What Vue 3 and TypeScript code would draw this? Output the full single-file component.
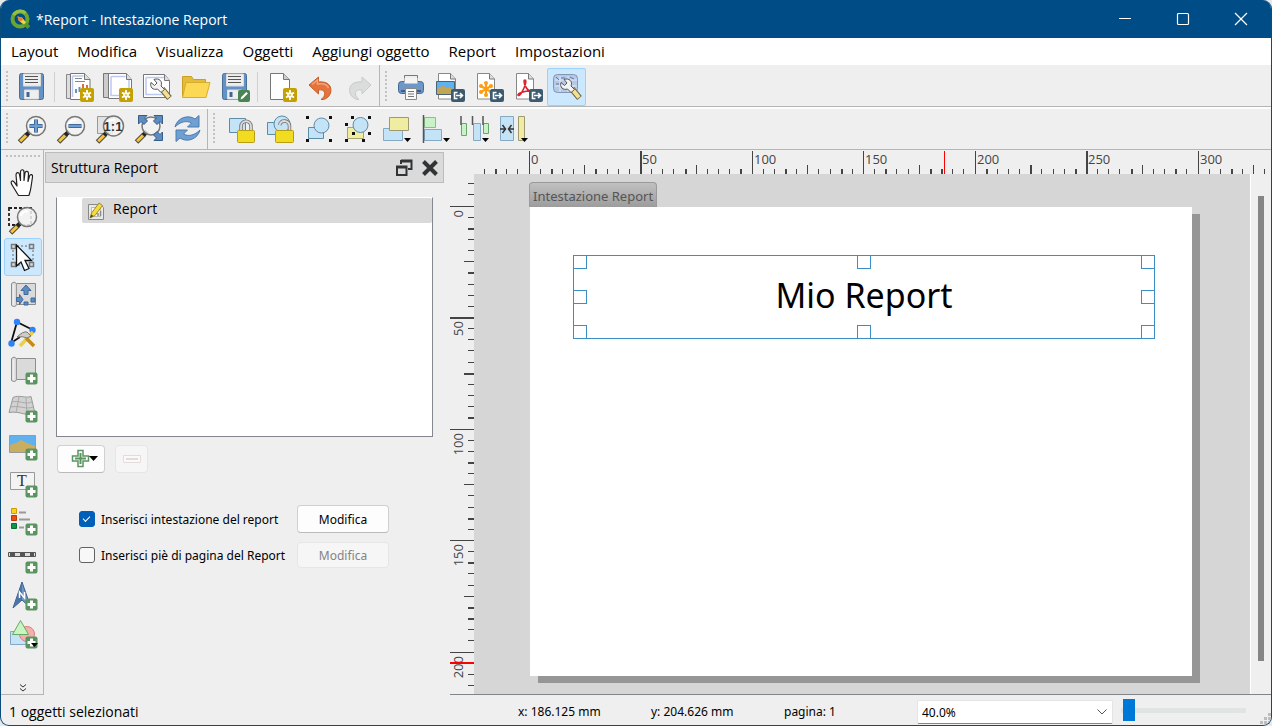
<script setup lang="ts">
import { ref } from 'vue'

interface Tool {
  id: string
  label: string
  active?: boolean
}

const menus = ['Layout', 'Modifica', 'Visualizza', 'Oggetti', 'Aggiungi oggetto', 'Report', 'Impostazioni']

const layoutTools: Tool[] = [
  { id: 'newReport', label: 'Nuovo layout' },
  { id: 'duplicate', label: 'Duplica layout' },
  { id: 'manager', label: 'Gestore layout' },
  { id: 'folder', label: 'Aggiungi da modello' },
  { id: 'saveAs', label: 'Salva come modello' },
]
const pageTools: Tool[] = [
  { id: 'newPage', label: 'Aggiungi pagine' },
  { id: 'undo', label: 'Annulla' },
  { id: 'redo', label: 'Ripristina' },
]
const exportTools: Tool[] = [
  { id: 'print', label: 'Stampa' },
  { id: 'exportImage', label: 'Esporta come immagine' },
  { id: 'exportSvg', label: 'Esporta come SVG' },
  { id: 'exportPdf', label: 'Esporta come PDF' },
  { id: 'settings', label: 'Impostazioni report', active: true },
]
const zoomTools: Tool[] = [
  { id: 'zoomIn', label: 'Ingrandisci' },
  { id: 'zoomOut', label: 'Rimpicciolisci' },
  { id: 'zoomActual', label: 'Zoom al 100%' },
  { id: 'zoomFull', label: 'Zoom completo' },
  { id: 'refresh', label: 'Aggiorna vista' },
]
const itemTools: Tool[] = [
  { id: 'lock', label: 'Blocca oggetti' },
  { id: 'unlock', label: 'Sblocca oggetti' },
  { id: 'group', label: 'Raggruppa' },
  { id: 'ungroup', label: 'Separa' },
  { id: 'raise', label: 'Porta in primo piano' },
  { id: 'align', label: 'Allinea' },
  { id: 'distribute', label: 'Distribuisci' },
  { id: 'resize', label: 'Ridimensiona' },
]
const sideTools: Tool[] = [
  { id: 'pan', label: 'Sposta layout' },
  { id: 'zoomArea', label: 'Zoom' },
  { id: 'select', label: 'Seleziona oggetto', active: true },
  { id: 'moveContent', label: 'Sposta contenuto' },
  { id: 'editNodes', label: 'Modifica nodi' },
  { id: 'addMap', label: 'Aggiungi mappa' },
  { id: 'add3d', label: 'Aggiungi mappa 3D' },
  { id: 'addPicture', label: 'Aggiungi immagine' },
  { id: 'addLabel', label: 'Aggiungi etichetta' },
  { id: 'addLegend', label: 'Aggiungi legenda' },
  { id: 'addScale', label: 'Aggiungi barra di scala' },
  { id: 'addNorth', label: 'Aggiungi freccia nord' },
  { id: 'addShape', label: 'Aggiungi forma' },
]

const plusBadge =
  '<rect x="17.500" y="17.500" width="12" height="12" rx="2" fill="#5a9460"/><path d="M23.500 19.500v8M19.500 23.500h8" stroke="#fff" stroke-width="3"/>'
const starBadge =
  '<rect x="16" y="16" width="14" height="14" rx="2" fill="#c4a000"/><path d="M23 18v10M19 20.500l8 5M27 20.500l-8 5" stroke="#fff" stroke-width="1.800"/><circle cx="23" cy="23" r="2.800" fill="#fff"/><circle cx="23" cy="23" r="1.300" fill="#e3cf6c"/>'
const exportBadge =
  '<rect x="16" y="17" width="14" height="13" rx="2" fill="#3d5b70"/><path d="M22.500 20.500h-3v6h3M21 23.500h6M25 21l2.500 2.500L25 26" fill="none" stroke="#fff" stroke-width="1.600"/>'
const dropArrow = '<path d="M22 24h7l-3.500 4z" fill="#000"/>'
const floppy =
  '<rect x="2.500" y="1.500" width="24" height="26" rx="2" fill="#6393c6" stroke="#4a6f97"/><path d="M6.500 2h17v12h-17z" fill="#eee" stroke="#dcdcdc"/><path d="M8 4.500h13M8 7.500h13M8 10.500h13" stroke="#555"/><path d="M7.500 18h14v9h-14z" fill="#efefef" stroke="#ddd"/><path d="M9.500 20h3v5h-3z" fill="#41658f"/>'
const lens = (cx: number, cy: number, r: number) =>
  `<path d="M2.500 28L10 20.500" stroke="#4b4b3c" stroke-width="5"/><path d="M3.200 27.300L9 21.500" stroke="#f6c443" stroke-width="3"/><path d="M9.500 21l3.500-3.500" stroke="#222" stroke-width="4.500"/><circle cx="${cx}" cy="${cy}" r="${r}" fill="#f2f2f0" fill-opacity=".85" stroke="#777" stroke-width="1.500"/><path d="M${cx - r + 3} ${cy - 1}a${r - 3} ${r - 3} 0 0 1 ${r - 2} -${r - 5}" fill="none" stroke="#fff" stroke-width="2"/>`
const wrench =
  '<path d="M20 17l7.500 9" stroke="#6b6443" stroke-width="6"/><path d="M20.500 17.500l6.500 8" stroke="#f4df95" stroke-width="4"/><path d="M12 7.500c5-2 9 2 7 6.500l3.500 3.500-3.500 3-3.500-3.500c-4.500 1.500-8-2-6.500-6.500l3.500 3 2.500-2.500z" fill="#f4f4f4" stroke="#555"/>'
const docPage = '<path d="M3.500 1.500h12l5 5.500v20h-17z" fill="#fff" stroke="#888"/><path d="M15.500 1.500v5.500h5" fill="#ddd" stroke="#777"/>'
const sheet =
  '<path d="M3.500 3.500Q6 .5 8.500 3.500H27.500V24.500H8.500Q7.500 28 3.500 25.500Z" fill="#dadada" stroke="#8d8d8d"/><path d="M8.500 4V24.500" stroke="#999"/><path d="M5.500 4.500V25" stroke="#f0f0f0" stroke-width="1.500"/>'
const dots = (pts: number[][]) => pts.map(([x, y]) => `<path d="M${x} ${y}h3v3h-3z" fill="#111"/>`).join('')

const icons: Record<string, string> = {
  save: floppy,
  saveAs: floppy + '<rect x="18" y="18" width="12" height="12" rx="2" fill="#4b8454"/><path d="M20.500 27.500l.8-2.600 5-4.900 1.600 1.600-5 5z" fill="#fff"/>',
  newReport:
    '<path d="M2.500 2.500h18v24h-18z" fill="#ddd" stroke="#888"/><path d="M6.500 1.500h14l5.500 6v20H6.500z" fill="#fff" stroke="#777"/><path d="M8.500 4h11M8.500 4v21" stroke="#b9c9ef" stroke-width="1.500"/><path d="M20.500 1.500v6h5.500" fill="#ddd" stroke="#777"/><path d="M11 6.500h7M11 9.500h10" stroke="#888"/><path d="M12 17v4M15.500 15v5" stroke="#6b8fc4" stroke-width="2"/><path d="M19 12v5M23 13v3" stroke="#d36d4b" stroke-width="2"/>' +
    starBadge,
  duplicate:
    '<path d="M.5 1.500h19v24H.5z" fill="#ccc" stroke="#777"/><path d="M5.500 1.500h18l5 6v19h-23z" fill="#fff" stroke="#777"/><path d="M8 4.500h14.500M8 4.500v19h12M26 8v10" fill="none" stroke="#b9c9ef" stroke-width="1.500"/><path d="M23.500 1.500v6h5" fill="#ddd" stroke="#777"/>' +
    starBadge,
  manager:
    '<path d="M1.500 2.500h21l5 6v17h-26z" fill="#fff" stroke="#777"/><path d="M4 5.500h18M4 5.500v17h20" fill="none" stroke="#b9c9ef" stroke-width="1.500"/><path d="M22.500 2.500v6h5" fill="#ddd" stroke="#777"/>' +
    wrench,
  folder:
    '<path d="M1.500 4.500h9l2 3h12v17h-23z" fill="#e5bc38" stroke="#c99f28"/><path d="M1.500 25.500L5 10.500h24l-4 15z" fill="#fcd955" stroke="#d7ad30"/>',
  newPage: '<path d="M3.500 1.500h13l6 6v20h-19z" fill="#fff" stroke="#777"/><path d="M16.500 1.500v6h6" fill="#ccc" stroke="#777"/>' + starBadge,
  undo: '<path d="M3 13L12.500 5v5c9-1 14 4 12 11-1 3-3.500 5.500-7 6.500H15c3.500-2.500 4-5 3.500-7-.7-2.500-3-3-6-2.500V22z" fill="#e4743c" stroke="#c85c2a"/><path d="M6 12.500l5.500-4.500v4c6-1 10 1 11 4" fill="none" stroke="#f2a47a" stroke-width="1.500"/>',
  redo: '<path d="M26 13L17 5v5C8 9 3 14 5 21c1 3 3.500 5.500 7 6.500h2c-3-2.500-4-5-3.500-7 .7-2.500 3-3 6.500-2.500V22z" fill="#dadddb" stroke="#c7cbc9"/>',
  print:
    '<path d="M8.500 3.500h13v9h-13z" fill="#eee" stroke="#777"/><rect x="2.500" y="9.500" width="25" height="12" rx="3" fill="#6e96c6" stroke="#466a97"/><path d="M8.500 6h13v5.500h-13z" fill="#f4f4f4"/><path d="M5 19h20" stroke="#405f86" stroke-width="2"/><path d="M9.500 16.500h11v11h-11z" fill="#fafafa" stroke="#888"/><path d="M12 19.500h6M12 22h6M12 24.500h6" stroke="#777"/>',
  exportImage:
    docPage + '<path d="M1.500 9.500h18v13h-18z" fill="#5fb1f0" stroke="#4a6275"/><path d="M2 18q5-7 10-2 4-1 7 2v4H2z" fill="#c2a655"/>' + exportBadge,
  exportSvg:
    docPage +
    '<path d="M12 10v14M6 13.500l12 7M18 13.500l-12 7" stroke="#ff9c10" stroke-width="2.200"/><g fill="#ff9c10"><circle cx="12" cy="11" r="2"/><circle cx="12" cy="23" r="2"/><circle cx="7" cy="14" r="2"/><circle cx="17" cy="20" r="2"/><circle cx="17" cy="14" r="2"/><circle cx="7" cy="20" r="2"/></g>' +
    exportBadge,
  exportPdf:
    docPage +
    '<path d="M12 8c2 0 0 7-3 12-2 4-4 4-4 3 0-2 7-4 12-4 3 0 4 1 2 1-4 0-8-7-8-11 0-.7.500-1 1-1z" fill="none" stroke="#d9232e" stroke-width="1.600"/>' +
    exportBadge,
  settings:
    '<rect x="1.500" y="2.500" width="24" height="18" rx="4" fill="#b5c8e6" stroke="#8296b6"/><path d="M3 8h22M3 14h22M8 4v16M16 4v16" stroke="#dfe9f7"/><path d="M4 5l3 3M9 6h4M18 5l4 2M4 12h3" stroke="#5c79a8"/>' +
    wrench,
  zoomIn: lens(19, 12, 9.5) + '<path d="M19 5.500v13M12.500 12h13" stroke="#34598a" stroke-width="4"/><path d="M19 6v12M13 12h12" stroke="#6f9ed4" stroke-width="2.500"/>',
  zoomOut: lens(19, 12, 9.5) + '<path d="M12.500 12h13" stroke="#34598a" stroke-width="4"/><path d="M13 12h12" stroke="#6f9ed4" stroke-width="2.500"/>',
  zoomActual:
    '<path d="M2.500 2.500h15v17h-15z" fill="#e2e2e2" stroke="#999"/>' +
    lens(18.5, 12, 10) +
    '<text x="18" y="17" text-anchor="middle" font-family="Liberation Sans, sans-serif" font-weight="700" font-size="13" fill="#333">1:1</text>',
  zoomFull:
    lens(17, 12, 9) +
    '<g fill="#5d8cc0" stroke="#365c8c"><path d="M4.500 1.500h8.500l-2.500 2.500 3 3-3.500 3.500-3-3-2.500 2.500z"/><path d="M28.500 1.500v8.500l-2.500-2.500-3 3-3.500-3.500 3-3-2.500-2.500z"/><path d="M28.500 26.500h-8.500l2.500-2.500-3-3 3.500-3.500 3 3 2.500-2.500z"/></g>',
  refresh:
    '<path d="M2 13C4 4 15 0 22 5l4-3.500V13H14.500L18.500 9C13 6 7 8 2 13z" fill="#6f9fd3" stroke="#4c7cb0"/><path d="M27 16c-2 9-13 13-20 8l-4 3.500V16h11.500L10.500 20c5.500 3 11.500 1 16.500-4z" fill="#6f9fd3" stroke="#4c7cb0"/>',
  lock: '<path d="M3.500 4.500h16v14h-16z" fill="#c5e3f6" stroke="#5c8ba8"/><path d="M15 17v-4.500c0-7 10-7 10 0V17" fill="none" stroke="#777" stroke-width="3.500"/><path d="M15 17v-4.500c0-7 10-7 10 0V17" fill="none" stroke="#ddd" stroke-width="1.800"/><rect x="11.500" y="16.500" width="17" height="12" rx="1" fill="#f1dc22" stroke="#b79d12"/>',
  unlock:
    '<path d="M2.500 8.500h13v12h-13z" fill="#c5e3f6" stroke="#5c8ba8"/><circle cx="17" cy="10" r="8" fill="#c5e3f6" stroke="#5c8ba8"/><path d="M14.500 11c2-6 10-5 10 1.500V17" fill="none" stroke="#777" stroke-width="3.500"/><path d="M14.500 11c2-6 10-5 10 1.500V17" fill="none" stroke="#ddd" stroke-width="1.800"/><rect x="10.500" y="16.500" width="18" height="12" rx="1" fill="#f1dc22" stroke="#b79d12"/>',
  group:
    '<path d="M4.500 13.500h15v11h-15z" fill="#c5e3f6" stroke="#5c8ba8"/><circle cx="17.500" cy="11.500" r="7.500" fill="#c5e3f6" stroke="#5c8ba8"/>' +
    dots([[2, 2], [25, 2], [2, 25], [25, 25]]),
  ungroup:
    '<path d="M4.500 13.500h16v11h-16z" fill="#f0eca2" stroke="#aaa56b"/><circle cx="17.500" cy="11" r="7.500" fill="#c5e3f6" stroke="#5c8ba8"/>' +
    dots([[2, 9], [2, 25], [19, 25], [8, 2], [25, 2], [25, 18], [9, 18]]),
  raise: '<path d="M1.500 14.500h19v12h-19z" fill="#c5e3f6" stroke="#84a9c4"/><path d="M7.500 3.500h19v13h-19z" fill="#f0eca2" stroke="#9d9a72"/>' + dropArrow,
  align: '<path d="M3.500 3.500h11v10h-11z" fill="#c8f3c8" stroke="#89bf89"/><path d="M3.500 15.500h17v11h-17z" fill="#c5e3f6" stroke="#84a9c4"/><path d="M2.500 1v28" stroke="#555" stroke-width="1.500"/>' + dropArrow,
  distribute:
    '<path d="M1.500 9.500h5v12h-5zM23.500 9.500h5v10h-5z" fill="#c8f3c8" stroke="#6ca56c"/><path d="M13.500 9.500h7v17h-7z" fill="#c5e3f6" stroke="#84a9c4"/><path d="M1 2v9M12.500 2v9M23 2v9" stroke="#555" stroke-width="1.500"/>' +
    dropArrow,
  resize:
    '<path d="M1.500 2.500h13v24h-13z" fill="#c5e3f6" stroke="#84a9c4"/><path d="M19.500 2.500h6v24h-6z" fill="#f0eca2" stroke="#9d9a72"/><path d="M1 15h5M3.500 11l3 4-3 4M15 15h-5M12.500 11l-3 4 3 4" fill="none" stroke="#333" stroke-width="1.500"/>' +
    dropArrow,
  pan: '<path d="M10.500 28.500L5 19.500c-2-3-2.500-5-1-5.500 2-.5 3.500 3 5 5L8 8c0-3 3-3 3.500-.5l1 6V5c0-3 3.500-3 3.500 0v8.500L17 6c.5-2.500 3.500-2 3.500.5l-.5 8 1.500-5.500c1-2.500 3.500-1.500 3 1L23 20c-.5 4-1.500 6-2 8.500z" fill="#fff" stroke="#222" stroke-width="1.200" stroke-linejoin="round"/>',
  zoomArea: '<path d="M1 3h22v17H1z" fill="none" stroke="#222" stroke-width="1.800" stroke-dasharray="3 2"/>' + lens(19, 12, 9.5),
  select:
    '<path d="M5 4h20v19H5z" fill="none" stroke="#666" stroke-dasharray="2 2"/><g fill="#ddd" stroke="#777" stroke-width="1.500"><path d="M3.500 2.500h4v4h-4zM21.500 2.500h4v4h-4zM3.500 20.500h4v4h-4zM21.500 20.500h4v4h-4z"/></g><path d="M8.500 3v21l4.500-4 3.500 8.500 4.500-2-4-8h6.500z" fill="#fff" stroke="#111" stroke-width="1.300"/>',
  moveContent:
    sheet +
    '<g fill="#5d8cc0" stroke="#41699b"><path d="M18 5l5 5.500h-3v4h-4v-4h-3zM8.500 17.500h3v-3l3.500 5-3.500 5v-3h-3zM16 22h4v3h-4zM23 18h4v4h-4z"/></g>',
  editNodes:
    '<path d="M9 4L3 25M9 4l16 8M3 25l9-6" stroke="#111" stroke-width="1.800"/><g fill="#2f82f5"><circle cx="9" cy="4" r="3.200"/><circle cx="24.500" cy="12" r="3.200"/><circle cx="3.500" cy="25.500" r="3.200"/></g><path d="M12 28L25 14" stroke="#ecd044" stroke-width="3.500"/><path d="M18 20l8 8" stroke="#c58a19" stroke-width="3.500"/><path d="M9 19q6-6 10-5l4 4-4 2q-4-2-10-1z" fill="#ccc" stroke="#777"/>',
  addMap: sheet + plusBadge,
  add3d:
    '<path d="M5 4.500c6-3 12 1 18-1l4 17c-7 4-15-3-26-1z" fill="#d2d2d2" stroke="#999"/><path d="M3 14c8-2 16 3 22 0M4 9c7-2 14 3 20 0M11 4l-3 16M18 5l1 17" fill="none" stroke="#aaa"/>' +
    plusBadge,
  addPicture: '<path d="M1.500 4.500h26v17h-26z" fill="#5fb1f0" stroke="#999"/><path d="M2 14l6-2 5-3 6 3 8 3v6H2z" fill="#c9ae5f"/>' + plusBadge,
  addLabel:
    '<path d="M2.500 4.500h24v17h-24z" fill="#f3f3f3" stroke="#999"/><text x="14" y="18" text-anchor="middle" font-family="Liberation Serif, serif" font-size="16" fill="#333">T</text>' + plusBadge,
  addLegend:
    '<path d="M3.500 2.500h5v5h-5z" fill="#fcd01c" stroke="#cf9b00"/><path d="M3.500 9.500h5v5h-5z" fill="#ef4a12" stroke="#b93908"/><path d="M3.500 17.500h5v5h-5z" fill="#12934c" stroke="#0c6c37"/><path d="M11 6.500h7M11 13.500h11M11 21.500h5" stroke="#999" stroke-width="2"/>' +
    plusBadge,
  addScale: '<path d="M.5 8.500h27v4H.5z" fill="#ddd" stroke="#555"/><path d="M2 10.500h5M12 10.500h5M22 10.500h4" stroke="#555" stroke-width="3"/>' + plusBadge,
  addNorth:
    '<path d="M14 1L5 27l9-8 9 8z" fill="#6f97c7" stroke="#395c88"/><path d="M14 1L5 27l9-8z" fill="#4d74a5"/><path d="M11.500 17v-6l5 6v-6" fill="none" stroke="#fff" stroke-width="1.500"/>' + plusBadge,
  addShape:
    '<path d="M2.500 12.500h16v13h-16z" fill="#c5e3f6" stroke="#84a9c4"/><circle cx="19" cy="15" r="7.500" fill="#f6b0ac" stroke="#d97f7b"/><path d="M12.500 1.500l8 14h-16z" fill="#c8f5c0" stroke="#69a865"/>' +
    plusBadge +
    '<path d="M23 24h7l-3.500 4z" fill="#000"/>',
}

// Ruler geometry: a tick every 5 mm, long ticks every 50 mm
const PX_PER_MM = 2.23
const THICK_X = new Set([-15, 10, 30, 50, 70, 95, 115, 140, 160, 180, 185, 205, 225, 245, 250, 270, 290, 315])
const THICK_Y = new Set([10, 30, 50, 75, 95, 115, 140, 160, 180, 185])

interface Tick {
  mm: number
  pos: number
  len: number
  size: number
  major: boolean
}

function ticks(from: number, to: number, origin: number, minor: number, thick: Set<number>): Tick[] {
  const list: Tick[] = []
  for (let mm = from; mm <= to; mm += 5) {
    const major = mm % 50 === 0
    const len = major ? minor + 18 : mm % 25 === 0 ? minor + 4 : minor
    list.push({ mm, pos: Math.floor(origin + mm * PX_PER_MM), len, size: thick.has(mm) ? 2 : 1, major })
  }
  return list
}

const ticksX = ticks(-20, 330, 55, 5, THICK_X)
const ticksY = ticks(-10, 215, 32, 6, THICK_Y)

const header = ref(true)
const footer = ref(false)
const zoom = ref('40.0%')
const slider = ref(2)
const handles = ['nw', 'n', 'ne', 'w', 'e', 'sw', 's', 'se']
</script>

<template>
  <div class="window">
    <header class="titlebar">
      <svg class="logo" viewBox="0 0 20 20" aria-hidden="true">
        <circle cx="10" cy="10" r="7.500" fill="none" stroke="#6aa52d" stroke-width="4" />
        <path d="M3.500 6a8 8 0 0 1 12-2" fill="none" stroke="#93c043" stroke-width="3" />
        <path d="M11 11l8 7.500" stroke="#5b962c" stroke-width="4" />
        <path d="M7.500 7.500l4.500 1 4 5-2 2-5.500-4z" fill="#f0d24a" />
        <path d="M7.500 7.500l4.500 1 1 2-2.500 2-2-1.500z" fill="#ee7b33" />
      </svg>
      <h1>*Report - Intestazione Report</h1>
      <div class="controls">
        <button aria-label="Riduci a icona"><svg viewBox="0 0 14 14"><path d="M1 6.500h12" /></svg></button>
        <button aria-label="Ingrandisci"><svg viewBox="0 0 14 14"><rect x="1.500" y="1.500" width="11" height="11" rx="1" /></svg></button>
        <button aria-label="Chiudi"><svg viewBox="0 0 14 14"><path d="M1 1l12 12M13 1L1 13" /></svg></button>
      </div>
    </header>

    <nav class="menubar">
      <button v-for="m in menus" :key="m">{{ m }}</button>
    </nav>

    <div class="toolrow first">
      <div class="toolgroup">
        <span class="grip"></span>
        <button class="tool" aria-label="Salva"><svg viewBox="0 0 30 30" v-html="icons.save"></svg></button>
        <span class="sep"></span>
        <button v-for="t in layoutTools" :key="t.id" class="tool" :aria-label="t.label">
          <svg viewBox="0 0 30 30" v-html="icons[t.id]"></svg>
        </button>
        <span class="sep"></span>
        <button v-for="t in pageTools" :key="t.id" class="tool" :aria-label="t.label">
          <svg viewBox="0 0 30 30" v-html="icons[t.id]"></svg>
        </button>
      </div>
      <div class="toolgroup last">
        <span class="grip"></span>
        <button v-for="t in exportTools" :key="t.id" class="tool" :class="{ active: t.active }" :aria-label="t.label">
          <svg viewBox="0 0 30 30" v-html="icons[t.id]"></svg>
        </button>
      </div>
    </div>
    <div class="toolrow second">
      <div class="toolgroup">
        <span class="grip"></span>
        <button v-for="t in zoomTools" :key="t.id" class="tool" :aria-label="t.label">
          <svg viewBox="0 0 30 30" v-html="icons[t.id]"></svg>
        </button>
      </div>
      <div class="toolgroup last">
        <span class="grip"></span>
        <button v-for="t in itemTools" :key="t.id" class="tool" :aria-label="t.label">
          <svg viewBox="0 0 30 30" v-html="icons[t.id]"></svg>
        </button>
      </div>
    </div>

    <main class="main">
      <aside class="sidebar">
        <span class="grip-h"></span>
        <button v-for="t in sideTools" :key="t.id" class="side-tool" :class="{ active: t.active }" :aria-label="t.label">
          <svg viewBox="0 0 30 30" v-html="icons[t.id]"></svg>
        </button>
        <button class="more" aria-label="Altri strumenti">
          <svg viewBox="0 0 8 8"><path d="M1 .5l3 2.500 3-2.500M1 4.500l3 2.500 3-2.500" /></svg>
        </button>
      </aside>

      <section class="dock">
        <header class="dock-title">
          <h2>Struttura Report</h2>
          <button aria-label="Sgancia pannello">
            <svg viewBox="0 0 18 18"><path d="M6 1.500h10.500v8.500h-3.500M6 2.500h11M6 1v4" /><path d="M2 7.500h9.500v8.500H2zM2 8.500h10" /></svg>
          </button>
          <button aria-label="Chiudi pannello">
            <svg class="cross" viewBox="0 0 18 18"><path d="M2.500 2.500l13 13M15.500 2.500l-13 13" /></svg>
          </button>
        </header>
        <div class="tree" role="tree">
          <div class="tree-row" role="treeitem" aria-selected="true">
            <svg viewBox="0 0 20 20" aria-hidden="true">
              <path d="M2.500 3.500h12l3 3v12h-15z" fill="#e9e9e9" stroke="#888" />
              <path d="M5.500 6.500h9v9h-9z" fill="#fafafa" stroke="#bbb" />
              <path d="M12 12v3M14.500 10v5" stroke="#888" stroke-width="1.500" />
              <path d="M4 17l1.500-5L13 2l3.500 2.500-7.500 10z" fill="#f3dc3c" stroke="#9b8a2c" />
              <path d="M4 17l1.300-3.500L7.500 15z" fill="#444" />
            </svg>
            <span>Report</span>
          </div>
        </div>
        <div class="tree-actions">
          <button class="add" aria-label="Aggiungi sezione">
            <svg viewBox="0 0 28 20" aria-hidden="true">
              <path d="M7 1.500h5v5.500h5.500v5H12v5.500H7V12H1.500V7H7z" fill="#fff" stroke="#5a9460" stroke-width="1.500" />
              <path d="M9.500 4v11M4 9.500h11" stroke="#5a9460" stroke-width="2" />
              <path d="M18 7h9l-4.500 5z" fill="#000" />
            </svg>
          </button>
          <button class="remove" disabled aria-label="Rimuovi sezione">
            <svg viewBox="0 0 20 10" aria-hidden="true">
              <path d="M1.500 1.500h17v7h-17z" fill="#fbf8f8" stroke="#e4dcdc" />
              <path d="M4 5h12" stroke="#e4dada" stroke-width="2" />
            </svg>
          </button>
        </div>
        <div class="options">
          <label><input v-model="header" type="checkbox" /><span>Inserisci intestazione del report</span></label>
          <button>Modifica</button>
          <label><input v-model="footer" type="checkbox" /><span>Inserisci piè di pagina del Report</span></label>
          <button disabled>Modifica</button>
        </div>
      </section>

      <section class="view">
        <svg class="ruler-x" aria-hidden="true">
          <g v-for="t in ticksX" :key="t.mm">
            <rect :x="t.pos" :y="24 - t.len" :width="t.size" :height="t.len" />
            <text v-if="t.major" :x="t.pos + 2" y="14">{{ t.mm }}</text>
          </g>
          <rect class="cursor" x="470" y="1" width="1" height="23" />
        </svg>
        <svg class="ruler-y" aria-hidden="true">
          <g v-for="t in ticksY" :key="t.mm">
            <rect :x="24 - t.len" :y="t.pos" :width="t.len" :height="t.size" />
            <text v-if="t.major" text-anchor="end" :transform="`translate(13 ${t.pos + 4}) rotate(-90)`">{{ t.mm }}</text>
          </g>
          <rect class="cursor" x="0" y="488" width="24" height="2" />
        </svg>
        <div class="canvas">
          <div class="page-tab">Intestazione Report</div>
          <div class="paper">
            <div class="item">
              <span>Mio Report</span>
              <i v-for="h in handles" :key="h" class="handle" :class="h"></i>
            </div>
          </div>
        </div>
        <div class="scroll"><div class="thumb"></div></div>
      </section>
    </main>

    <footer class="status">
      <span class="message">1 oggetti selezionati</span>
      <span>x: 186.125 mm</span>
      <span>y: 204.626 mm</span>
      <span>pagina: 1</span>
      <div class="combo">
        <select v-model="zoom" aria-label="Livello di zoom">
          <option>40.0%</option>
          <option>100.0%</option>
        </select>
        <svg viewBox="0 0 10 6" aria-hidden="true"><path d="M.5 .5L5 5 9.500 .5" /></svg>
      </div>
      <input v-model="slider" class="slider" type="range" min="0" max="100" aria-label="Zoom" />
      <svg class="size-grip" viewBox="0 0 12 12" aria-hidden="true">
        <path d="M9 0h3v3H9zM9 4h3v3H9zM5 4h3v3H5zM9 8h3v3H9zM5 8h3v3H5zM1 8h3v3H1z" />
      </svg>
    </footer>
  </div>
</template>

<style>
html,
body {
  margin: 0;
  background: #e6e9ec;
}
</style>

<style scoped>
.window {
  box-sizing: border-box;
  display: flex;
  flex-direction: column;
  height: 100vh;
  overflow: hidden;
  border: 1px solid #0b4c7c;
  border-top: 0;
  border-radius: 9px;
  background: #efefef;
  color: #000;
  font-family: 'Open Sans', 'Noto Sans', sans-serif;
  font-size: 14px;
}
button {
  margin: 0;
  padding: 0;
  border: 0;
  background: none;
  color: inherit;
  font: inherit;
}
svg {
  display: block;
}
h1,
h2 {
  margin: 0;
  font-size: 14px;
  font-weight: 400;
}

.titlebar {
  display: flex;
  align-items: center;
  flex: none;
  height: 38px;
  padding-left: 9px;
  background: #004c87;
  color: #fff;
}
.logo {
  width: 20px;
  height: 20px;
  margin-right: 6px;
}
.controls {
  display: flex;
  margin-right: 1px;
  margin-left: auto;
}
.controls button {
  display: grid;
  place-items: center;
  width: 58px;
  height: 38px;
}
.controls svg {
  width: 14px;
  height: 14px;
  fill: none;
  stroke: #fff;
  stroke-width: 1.2;
}

.menubar {
  box-sizing: border-box;
  display: flex;
  flex: none;
  height: 27px;
  padding: 0 0 2px 10px;
  gap: 19px;
  background: #fff;
  font-size: 15px;
}

.toolrow {
  display: flex;
  flex: none;
  height: 40px;
  border-bottom: 1px solid #b5b5b5;
}
.toolrow.first {
  height: 41px;
  box-shadow: 0 2px 0 #fdfdfd;
  margin-bottom: 2px;
}
.toolgroup {
  display: flex;
  align-items: center;
  padding-top: 2px;
  border-right: 1px solid #b5b5b5;
}
.second .toolgroup {
  padding-top: 0;
}
.toolgroup.last {
  flex: 1;
  border-right: 0;
}
.grip {
  width: 11px;
  height: 32px;
  background: linear-gradient(#c2c2c2 2px, transparent 2px) 5px 0 / 2px 4px repeat-y;
}
.second .last .grip {
  width: 13px;
}
.sep {
  box-sizing: border-box;
  width: 8px;
  height: 30px;
  background: linear-gradient(#cfcfcf, #cfcfcf) 3px 0 / 1px 100% no-repeat;
}
.tool {
  box-sizing: border-box;
  display: grid;
  place-items: center;
  width: 39px;
  height: 38px;
  border: 1px solid transparent;
  border-radius: 2px;
}
.tool svg,
.side-tool svg {
  width: 30px;
  height: 30px;
}
.tool.active,
.side-tool.active {
  border-color: #99d1ff;
  background: #cce8ff;
}

.main {
  display: flex;
  flex: 1;
  min-height: 0;
}
.sidebar {
  box-sizing: border-box;
  display: flex;
  flex-direction: column;
  align-items: center;
  width: 43px;
  padding-left: 2px;
  border-right: 1px solid #b5b5b5;
  border-bottom: 1px solid #b5b5b5;
}
.grip-h {
  width: 34px;
  height: 13px;
  background: linear-gradient(90deg, #c2c2c2 2px, transparent 2px) 0 5px / 4px 2px repeat-x;
}
.side-tool {
  box-sizing: border-box;
  display: grid;
  place-items: center;
  flex: 1;
  width: 38px;
  min-height: 0;
  border: 1px solid transparent;
  border-radius: 3px;
}
.more {
  box-sizing: border-box;
  display: grid;
  place-items: end center;
  width: 38px;
  height: 41px;
  padding-bottom: 2px;
}
.more svg {
  width: 8px;
  height: 8px;
  fill: none;
  stroke: #333;
}

.dock {
  box-sizing: border-box;
  width: 400px;
  margin-right: 6px;
  padding-top: 2px;
  padding-left: 1px;
  font-family: 'Noto Sans', 'Open Sans', sans-serif;
  font-size: 12px;
}
.dock-title {
  box-sizing: border-box;
  display: flex;
  align-items: center;
  height: 31px;
  padding: 0 4px 0 5px;
  border: 1px solid #bcbcbc;
  background: #dadada;
  font-family: 'Open Sans', 'Noto Sans', sans-serif;
}
.dock-title h2 {
  flex: 1;
}
.dock-title button {
  margin-left: 8px;
}
.dock-title svg {
  width: 18px;
  height: 18px;
  fill: none;
  stroke: #303434;
  stroke-width: 2;
}
.dock-title svg.cross {
  stroke-width: 4;
}
.tree {
  box-sizing: border-box;
  height: 240px;
  margin: 14px 11px 0;
  border: 1px solid #828790;
  border-top-color: #fff;
  background: #fff;
}
.tree-row {
  display: flex;
  align-items: center;
  height: 25px;
  margin-left: 25px;
  padding-left: 4px;
  border-radius: 2px;
  background: #d9d9d9;
  font-family: 'Open Sans', 'Noto Sans', sans-serif;
  font-size: 14px;
}
.tree-row svg {
  width: 20px;
  height: 20px;
  margin-right: 7px;
}
.tree-row span {
  padding-bottom: 4px;
}
.tree-actions {
  display: flex;
  gap: 10px;
  margin: 8px 12px 0;
}
.tree-actions button,
.options button {
  box-sizing: border-box;
  display: grid;
  place-items: center;
  height: 28px;
  border: 1px solid #d0d0d0;
  border-bottom-color: #bababa;
  border-radius: 4px;
  background: #fdfdfd;
}
.tree-actions button:disabled,
.options button:disabled {
  border-color: #e6e6e6;
  background: #f6f6f6;
  color: #838383;
}
.tree-actions .add {
  width: 48px;
  padding-left: 8px;
}
.tree-actions .remove {
  width: 33px;
}
.add svg {
  width: 28px;
  height: 20px;
}
.remove svg {
  width: 20px;
  height: 10px;
}
.options {
  display: grid;
  grid-template-columns: 218px 92px;
  grid-auto-rows: 28px;
  row-gap: 8px;
  align-items: center;
  margin: 32px 0 0 34px;
}
.options label {
  display: flex;
  align-items: center;
  gap: 6px;
  white-space: nowrap;
}
.options input {
  appearance: none;
  box-sizing: border-box;
  width: 16px;
  height: 16px;
  margin: 0;
  border: 1px solid #626262;
  border-radius: 3px;
  background: #f8f8f8;
}
.options input:checked {
  border-color: #005fb8;
  background: #005fb8;
}
.options input:checked::after {
  content: '';
  display: block;
  width: 6px;
  height: 3px;
  margin: 4px 0 0 3px;
  border: solid #fff;
  border-width: 0 0 1px 1px;
  transform: rotate(-45deg);
}
.options button:disabled {
  height: 26px;
}

.view {
  display: grid;
  grid-template-columns: 24px 1fr 21px;
  grid-template-rows: 24px 1fr;
  flex: 1;
  min-width: 0;
  border-bottom: 1px solid #7d868c;
}
.ruler-x {
  grid-column: 2 / 4;
  width: 100%;
  height: 24px;
}
.ruler-y {
  grid-row: 2;
  width: 24px;
  height: 100%;
}
.ruler-x,
.ruler-y {
  fill: #444;
  font-size: 13px;
}
.cursor {
  fill: #f00;
}
.canvas {
  display: flex;
  flex-direction: column;
  align-items: flex-start;
  min-width: 0;
  padding: 8px 58px 18px 55px;
  background: #d6d6d6;
}
.page-tab {
  box-sizing: border-box;
  height: 25px;
  padding: 0 3px;
  border: 1px solid #9a9a9a;
  border-bottom: 0;
  border-radius: 4px 4px 0 0;
  background: linear-gradient(#c0c0c0, #9c9c9c);
  color: #555;
  font-family: 'Noto Sans', 'Open Sans', sans-serif;
  font-size: 13px;
  line-height: 26px;
  white-space: nowrap;
}
.paper {
  position: relative;
  flex: 1;
  align-self: stretch;
  margin-left: 1px;
  background: #fff;
  box-shadow: 8px 7px 0 #969696;
}
.item {
  box-sizing: border-box;
  position: absolute;
  top: 48px;
  right: 37px;
  left: 43px;
  display: grid;
  place-items: center;
  height: 84px;
  padding-bottom: 4px;
  border: 1px solid #3a8dc5;
  font-family: 'Noto Sans', 'Open Sans', sans-serif;
  font-size: 34px;
}
.handle {
  box-sizing: border-box;
  position: absolute;
  width: 14px;
  height: 14px;
  border: 1px solid #3a8dc5;
  background: #fff;
}
.nw,
.n,
.ne {
  top: -1px;
}
.sw,
.s,
.se {
  bottom: -1px;
}
.w,
.e {
  top: calc(50% - 7px);
}
.nw,
.w,
.sw {
  left: -1px;
}
.ne,
.e,
.se {
  right: -1px;
}
.n,
.s {
  left: calc(50% - 7px);
}
.scroll {
  padding: 22px 7px 33px 7px;
  border-left: 1px solid #fff;
}
.thumb {
  height: 100%;
  background: #858585;
}

.status {
  display: grid;
  grid-template-columns: 1fr 133px 133px 133px 196px 146px 12px;
  align-items: center;
  flex: none;
  height: 30px;
  padding-left: 8px;
  font-family: 'Noto Sans', 'Open Sans', sans-serif;
  font-size: 12px;
}
.message {
  padding-top: 2px;
  font-family: 'Open Sans', 'Noto Sans', sans-serif;
  font-size: 14px;
}
.status > span {
  padding-top: 3px;
}
.combo {
  display: grid;
  align-items: center;
  padding-top: 3px;
}
.combo select {
  grid-area: 1 / 1;
  appearance: none;
  width: 100%;
  height: 24px;
  padding: 1px 4px 0;
  border: 1px solid #e4e4e4;
  border-bottom-color: #868686;
  border-radius: 2px;
  background: #fff;
  color: #000;
  font: inherit;
}
.combo svg {
  grid-area: 1 / 1;
  justify-self: end;
  width: 10px;
  height: 6px;
  margin-right: 6px;
  fill: none;
  stroke: #555;
}
.slider {
  appearance: none;
  width: 125px;
  height: 22px;
  margin: 0 0 0 8px;
  background: linear-gradient(#e0e4e3, #e0e4e3) 0 9px / 100% 5px no-repeat;
}
.slider::-webkit-slider-thumb {
  appearance: none;
  width: 12px;
  height: 22px;
  background: #0078d7;
}
.status .size-grip {
  align-self: end;
  width: 12px;
  height: 12px;
  fill: #bdbdbd;
}
</style>
